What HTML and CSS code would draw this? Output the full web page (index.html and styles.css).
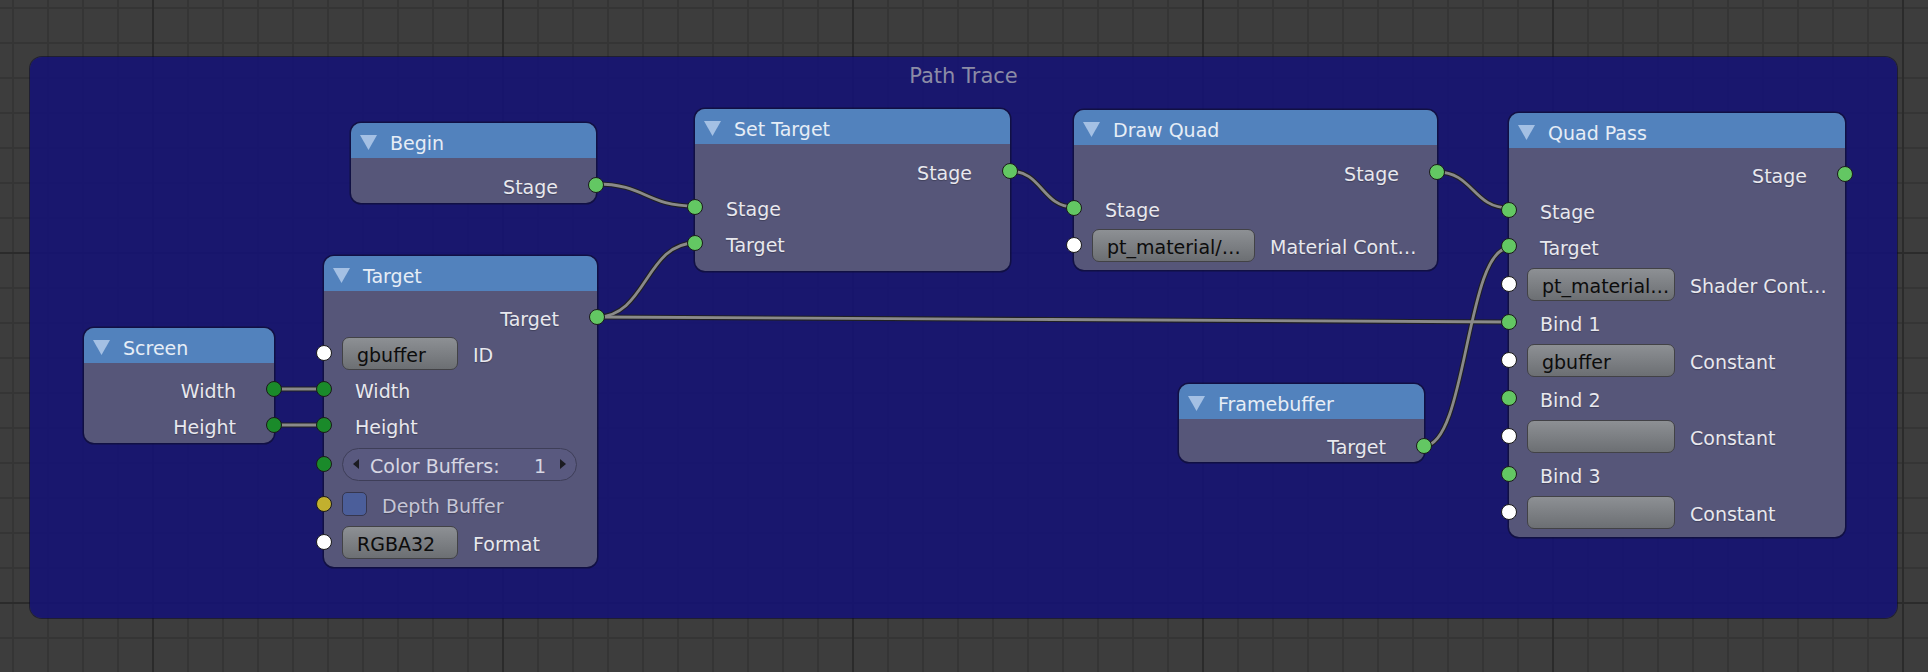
FILE: index.html
```html
<!DOCTYPE html>
<html>
<head>
<meta charset="utf-8">
<title>Node Editor</title>
<link rel="stylesheet" href="styles.css">
</head>
<body>
<div class="editor">
  <div class="frame"><div class="frame-title">Path Trace</div></div>

  <svg class="links" width="1928" height="672" viewBox="0 0 1928 672">
    <g class="wire-under">
      <path d="M596 184 C646 184 645 206 695 206"/>
      <path d="M597 317 C646 317 646 243 695 243"/>
      <path d="M597 317 C1053 317 1053 322 1509 322"/>
      <path d="M1010 171 C1042 171 1042 207 1074 207"/>
      <path d="M1437 172 C1473 172 1473 208 1509 208"/>
      <path d="M1424 446 C1467 446 1466 248 1509 248"/>
      <path d="M274 389 L324 389"/>
      <path d="M274 425 L324 425"/>
    </g>
    <g class="wire-core">
      <path d="M596 184 C646 184 645 206 695 206"/>
      <path d="M597 317 C646 317 646 243 695 243"/>
      <path d="M597 317 C1053 317 1053 322 1509 322"/>
      <path d="M1010 171 C1042 171 1042 207 1074 207"/>
      <path d="M1437 172 C1473 172 1473 208 1509 208"/>
      <path d="M1424 446 C1467 446 1466 248 1509 248"/>
      <path d="M274 389 L324 389"/>
      <path d="M274 425 L324 425"/>
    </g>
  </svg>

  <!-- Begin -->
  <div class="node n-begin">
    <div class="head"><svg class="tri" viewBox="0 0 17 15"><polygon points="0,0 17,0 8.5,15"/></svg><span class="title">Begin</span></div>
    <div class="body b-begin">
      <div class="row out"><span class="lbl">Stage</span><i class="sock r g"></i></div>
    </div>
  </div>

  <!-- Screen -->
  <div class="node n-screen">
    <div class="head"><svg class="tri" viewBox="0 0 17 15"><polygon points="0,0 17,0 8.5,15"/></svg><span class="title">Screen</span></div>
    <div class="body b-screen">
      <div class="row out"><span class="lbl">Width</span><i class="sock r dg"></i></div>
      <div class="row out"><span class="lbl">Height</span><i class="sock r dg"></i></div>
    </div>
  </div>

  <!-- Target -->
  <div class="node n-target">
    <div class="head"><svg class="tri" viewBox="0 0 17 15"><polygon points="0,0 17,0 8.5,15"/></svg><span class="title">Target</span></div>
    <div class="body b-target">
      <div class="row out"><span class="lbl">Target</span><i class="sock r g"></i></div>
      <div class="row wdg r-id"><i class="sock l w"></i><span class="field f-sm">gbuffer</span><span class="lbl">ID</span></div>
      <div class="row in"><i class="sock l dg"></i><span class="lbl">Width</span></div>
      <div class="row in"><i class="sock l dg"></i><span class="lbl">Height</span></div>
      <div class="row wdg r-color"><i class="sock l dg"></i>
        <span class="pill"><i class="arr al"></i><span class="pill-txt">Color Buffers:</span><span class="pill-val">1</span><i class="arr ar"></i></span>
      </div>
      <div class="row wdg r-depth"><i class="sock l y"></i><span class="check"></span><span class="lbl dim">Depth Buffer</span></div>
      <div class="row wdg r-format"><i class="sock l w"></i><span class="field f-sm">RGBA32</span><span class="lbl">Format</span></div>
    </div>
  </div>

  <!-- Set Target -->
  <div class="node n-set">
    <div class="head"><svg class="tri" viewBox="0 0 17 15"><polygon points="0,0 17,0 8.5,15"/></svg><span class="title">Set Target</span></div>
    <div class="body b-set">
      <div class="row out"><span class="lbl">Stage</span><i class="sock r g"></i></div>
      <div class="row in"><i class="sock l g"></i><span class="lbl">Stage</span></div>
      <div class="row in"><i class="sock l g"></i><span class="lbl">Target</span></div>
    </div>
  </div>

  <!-- Draw Quad -->
  <div class="node n-draw">
    <div class="head"><svg class="tri" viewBox="0 0 17 15"><polygon points="0,0 17,0 8.5,15"/></svg><span class="title">Draw Quad</span></div>
    <div class="body b-draw">
      <div class="row out"><span class="lbl">Stage</span><i class="sock r g"></i></div>
      <div class="row in"><i class="sock l g"></i><span class="lbl">Stage</span></div>
      <div class="row wdg r-mat"><i class="sock l w"></i><span class="field f-lg">pt_material/…</span><span class="lbl">Material Cont…</span></div>
    </div>
  </div>

  <!-- Quad Pass -->
  <div class="node n-quad">
    <div class="head"><svg class="tri" viewBox="0 0 17 15"><polygon points="0,0 17,0 8.5,15"/></svg><span class="title">Quad Pass</span></div>
    <div class="body b-quad">
      <div class="row out"><span class="lbl">Stage</span><i class="sock r g"></i></div>
      <div class="row in"><i class="sock l g"></i><span class="lbl">Stage</span></div>
      <div class="row in"><i class="sock l g"></i><span class="lbl">Target</span></div>
      <div class="row wdg tall"><i class="sock l w"></i><span class="field f-md">pt_material…</span><span class="lbl">Shader Cont…</span></div>
      <div class="row in"><i class="sock l g"></i><span class="lbl">Bind 1</span></div>
      <div class="row wdg tall"><i class="sock l w"></i><span class="field f-md">gbuffer</span><span class="lbl">Constant</span></div>
      <div class="row in"><i class="sock l g"></i><span class="lbl">Bind 2</span></div>
      <div class="row wdg tall"><i class="sock l w"></i><span class="field f-md"></span><span class="lbl">Constant</span></div>
      <div class="row in"><i class="sock l g"></i><span class="lbl">Bind 3</span></div>
      <div class="row wdg tall"><i class="sock l w"></i><span class="field f-md"></span><span class="lbl">Constant</span></div>
    </div>
  </div>

  <!-- Framebuffer -->
  <div class="node n-fb">
    <div class="head"><svg class="tri" viewBox="0 0 17 15"><polygon points="0,0 17,0 8.5,15"/></svg><span class="title">Framebuffer</span></div>
    <div class="body b-fb">
      <div class="row out"><span class="lbl">Target</span><i class="sock r g"></i></div>
    </div>
  </div>
</div>
</body>
</html>
```

FILE: styles.css
```css
html, body {
  margin: 0;
  padding: 0;
  background: #3d3d3d;
}

.editor {
  position: relative;
  width: 1928px;
  height: 672px;
  overflow: hidden;
  font-family: "DejaVu Sans", "Liberation Sans", sans-serif;
  font-size: 19px;
  background-color: #3d3d3d;
  background-image:
    linear-gradient(to right, #2b2b2b 0, #2b2b2b 2px, transparent 2px),
    linear-gradient(to bottom, #2b2b2b 0, #2b2b2b 2px, transparent 2px),
    linear-gradient(to right, #353535 0, #353535 2px, transparent 2px),
    linear-gradient(to bottom, #353535 0, #353535 2px, transparent 2px);
  background-size: 350px 100%, 100% 350px, 35px 35px, 35px 35px;
  background-position: 152px 0, 0 252px, 12px 0, 0 7px;
}

/* ---------- frame ---------- */
.frame {
  position: absolute;
  left: 30px;
  top: 57px;
  width: 1867px;
  height: 561px;
  border-radius: 12px;
  background: rgba(20, 18, 119, 0.86);
  box-shadow: 0 0 0 1px rgba(8, 8, 40, 0.55);
}

.frame-title {
  padding-top: 7px;
  text-align: center;
  font-size: 21px;
  line-height: 24px;
  color: #8c8ca6;
}

/* ---------- links ---------- */
.links {
  position: absolute;
  left: 0;
  top: 0;
  pointer-events: none;
}

.links path {
  fill: none;
  stroke-linecap: round;
}

.wire-under path {
  stroke: #202024;
  stroke-width: 5;
}

.wire-core path {
  stroke: #8a8a8a;
  stroke-width: 2.8;
}

/* ---------- nodes ---------- */
.node {
  position: absolute;
  border-radius: 10px;
  background: #565679;
  box-shadow: 0 0 0 1.5px rgba(12, 12, 40, 0.6);
  color: #e8e8ee;
}

.n-begin  { left: 351px;  top: 123px; width: 245px; }
.n-screen { left: 84px;   top: 328px; width: 190px; }
.n-target { left: 324px;  top: 256px; width: 273px; }
.n-set    { left: 695px;  top: 109px; width: 315px; }
.n-draw   { left: 1074px; top: 110px; width: 363px; }
.n-quad   { left: 1509px; top: 113px; width: 336px; }
.n-fb     { left: 1179px; top: 384px; width: 245px; }

.head {
  height: 35px;
  box-sizing: border-box;
  padding: 6px 0 0 9px;
  display: flex;
  align-items: center;
  gap: 13px;
  background: #5282bd;
  border-radius: 10px 10px 0 0;
}

.tri {
  width: 17px;
  height: 15px;
  flex: none;
  margin-top: -2px;
}

.tri polygon {
  fill: rgba(214, 230, 252, 0.62);
}

.title {
  color: #e6edf6;
  white-space: nowrap;
  line-height: 1;
}

.b-begin  { padding: 9px 0 0 0; }
.b-screen { padding: 8px 0 0 0; }
.b-target { padding: 8px 0 6px 0; }
.b-set    { padding: 9px 0 10px 0; }
.b-draw   { padding: 9px 0 6px 0; }
.b-quad   { padding: 8px 0 5px 0; }
.b-fb     { padding: 10px 0 0 0; }

.b-fb .row { height: 33px; }

.row {
  position: relative;
  height: 36px;
  display: flex;
  align-items: center;
  white-space: nowrap;
}

.row.out {
  justify-content: flex-end;
  padding-right: 38px;
}

.row.in {
  padding-left: 31px;
}

.row.wdg {
  padding-left: 18px;
  gap: 15px;
}

.row.tall { height: 40px; }
.r-id     { padding-left: 19px; }
.r-color  { height: 42px; padding-left: 19px; }
.r-depth  { height: 38px; padding-left: 23px; gap: 14px; }
.r-format { height: 38px; padding-left: 19px; }
.r-mat    { height: 38px; padding-left: 17px; }

.lbl {
  padding-top: 5px;
  line-height: 1.15;
  color: #e8e8ee;
  text-shadow: 0 1px 1px rgba(0, 0, 0, 0.25);
}

.lbl.dim {
  color: #c6c6d6;
}

/* ---------- sockets ---------- */
.sock {
  position: absolute;
  top: 50%;
  width: 16px;
  height: 16px;
  margin-top: -8px;
  box-sizing: border-box;
  border-radius: 50%;
  border: 1px solid #1a1a1a;
}

.sock.l { left: -8px; }
.sock.r { right: -8px; }

.sock.g  { background: #63c763; }
.sock.dg { background: #1a8a2a; }
.sock.w  { background: #ffffff; }
.sock.y  { background: #c2b02e; }

/* ---------- widgets ---------- */
.field {
  box-sizing: border-box;
  height: 33px;
  padding: 5px 0 0 14px;
  border-radius: 7px;
  border: 1.5px solid #424246;
  background: linear-gradient(to bottom, #8d9094, #6c6f73);
  color: #0c0c0c;
  line-height: 24px;
  overflow: hidden;
  flex: none;
}

.f-sm { width: 116px; }
.f-md { width: 148px; }
.f-lg { width: 163px; }

.pill {
  position: relative;
  box-sizing: border-box;
  width: 235px;
  height: 33px;
  border-radius: 17px;
  border: 1.5px solid #3e3e58;
  background: #59597f;
  display: flex;
  align-items: center;
  padding: 4px 0 0 27px;
  color: #d6d6e2;
}

.pill-txt {
  flex: 1;
}

.pill-val {
  margin-right: 30px;
}

.arr {
  position: absolute;
  top: 50%;
  margin-top: -5px;
  width: 0;
  height: 0;
  border-top: 5px solid transparent;
  border-bottom: 5px solid transparent;
}

.arr.al {
  left: 10px;
  border-right: 6px solid #1c1c22;
}

.arr.ar {
  right: 10px;
  border-left: 6px solid #1c1c22;
}

.check {
  box-sizing: border-box;
  width: 25px;
  height: 24px;
  border-radius: 5px;
  border: 1.5px solid #36364e;
  background: #4b5e9a;
  flex: none;
}
```
